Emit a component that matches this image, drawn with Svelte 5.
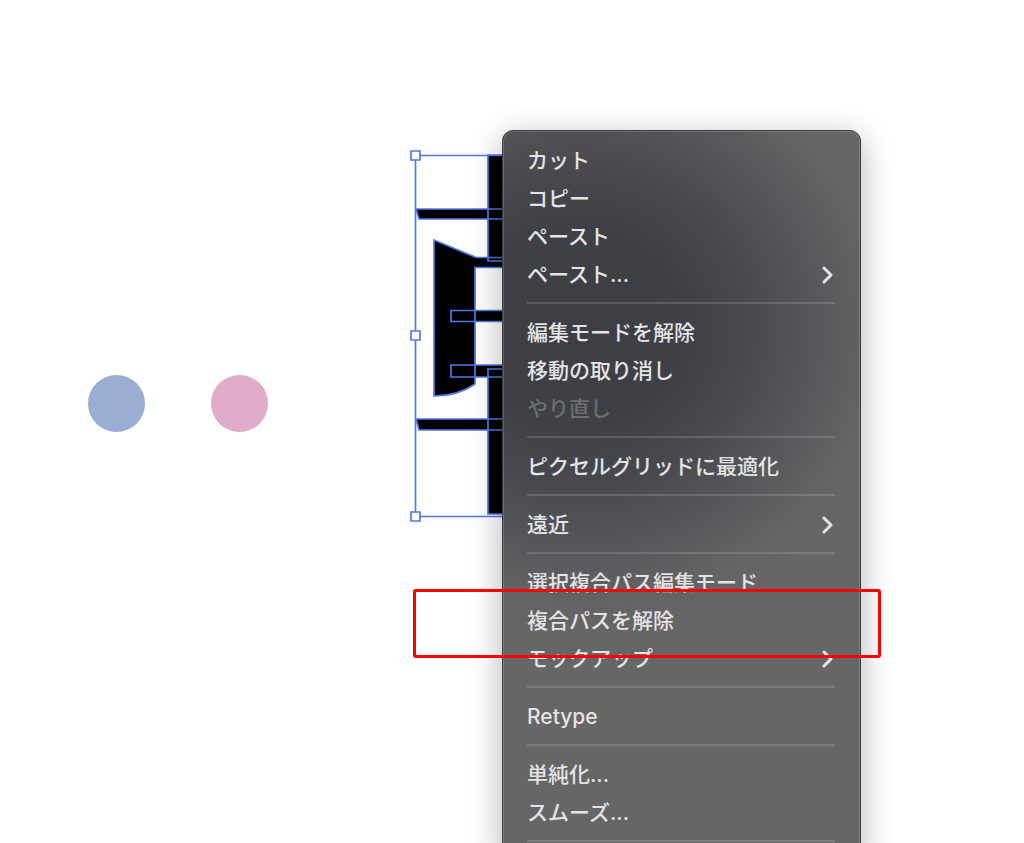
<script lang="ts">
  type Item = { label: string; submenu?: boolean; disabled?: boolean };

  const groups: Item[][] = [
    [
      { label: 'カット' },
      { label: 'コピー' },
      { label: 'ペースト' },
      { label: 'ペースト...', submenu: true }
    ],
    [
      { label: '編集モードを解除' },
      { label: '移動の取り消し' },
      { label: 'やり直し', disabled: true }
    ],
    [{ label: 'ピクセルグリッドに最適化' }],
    [{ label: '遠近', submenu: true }],
    [
      { label: '選択複合パス編集モード' },
      { label: '複合パスを解除' },
      { label: 'モックアップ', submenu: true }
    ],
    [{ label: 'Retype' }],
    [{ label: '単純化...' }, { label: 'スムーズ...' }]
  ];
</script>

<main class="canvas">
  <span class="dot dot-blue"></span>
  <span class="dot dot-pink"></span>

  <!-- Selected compound path -->
  <svg class="artwork" width="120" height="374" viewBox="0 0 120 374" aria-hidden="true">
    <g fill="#000">
      <path d="M79 6h41v106H79z" />
      <path d="M7 60h113v10H10z" />
      <path d="M25 91l42 17h53v10H66v117q-17 12-41 12z" />
      <path d="M42 161h78v11H42z" />
      <path d="M42 216h78v12H42z" />
      <path d="M79 220h41v145H79z" />
      <path d="M7 270h113v11H10z" />
    </g>
    <g fill="none" stroke="#5079e8" stroke-width="1.7">
      <path d="M120 7l-11-1H79v106h41" />
      <path d="M120 60H7l3 10h110" />
      <path d="M120 108.500H67L25 91v156q24 0 41-12V118.500h54" />
      <path d="M120 161.500H42v11h78" />
      <path d="M120 216H42v12h78" />
      <path d="M120 220H79v145h41" />
      <path d="M120 270H7l3 11h110" />
      <path d="M120 6.500H6.500v361H120" />
    </g>
    <g fill="#fff" stroke="#5079e8" stroke-width="1.7">
      <path d="M2 2h9v9H2z" />
      <path d="M2 182h9v9H2z" />
      <path d="M2 363h9v9H2z" />
    </g>
  </svg>

  <div class="menu" role="menu">
    {#each groups as group}
      {#each group as item}
        <button class="item" role="menuitem" disabled={item.disabled}>
          <span>{item.label}</span>
          {#if item.submenu}
            <svg class="chevron" width="13" height="18" viewBox="0 0 13 18" aria-hidden="true">
              <path d="M2 2l7 7-7 7" />
            </svg>
          {/if}
        </button>
      {/each}
      <hr />
    {/each}
  </div>

  <div class="highlight"></div>
</main>

<style>
  :global(body) {
    margin: 0;
    background: #fff;
  }

  .canvas {
    position: relative;
    height: 100vh;
    overflow: hidden;
    background: #fff;
    font-family: Inter, 'Noto Sans CJK JP', sans-serif;
  }

  .dot {
    position: absolute;
    top: 375px;
    width: 57px;
    height: 57px;
    border-radius: 50%;
  }

  .dot-blue {
    left: 88px;
    background: #9aadd3;
  }

  .dot-pink {
    left: 211px;
    background: #e1abca;
  }

  .artwork {
    position: absolute;
    top: 149px;
    left: 409px;
  }

  .menu {
    position: absolute;
    top: 130px;
    left: 502px;
    box-sizing: border-box;
    width: 359px;
    padding: 11px 25px 10px 24px;
    border: 1px solid #3c3d3e;
    border-radius: 11px;
    background:
      radial-gradient(
        ellipse 330px 310px at 75px 195px,
        #3d3e44 0%,
        #3f4046 32%,
        rgba(70, 71, 76, 0.92) 52%,
        rgba(80, 81, 86, 0.7) 72%,
        rgba(92, 92, 95, 0.35) 88%,
        rgba(102, 102, 102, 0) 100%
      ),
      #666;
    box-shadow:
      inset 0 0 0 1px rgba(255, 255, 255, 0.16),
      0 8px 32px rgba(0, 0, 0, 0.3);
  }

  .item {
    display: flex;
    align-items: center;
    justify-content: space-between;
    width: 100%;
    height: 38px;
    padding: 0;
    border: 0;
    background: none;
    color: #e4e4e5;
    font: inherit;
    font-size: 21px;
    font-weight: 500;
    line-height: 38px;
    text-align: left;
    white-space: nowrap;
  }

  .item:disabled {
    color: #6c6d71;
  }

  .chevron {
    fill: none;
    stroke: #e4e4e5;
    stroke-width: 3;
    stroke-linecap: round;
    stroke-linejoin: round;
  }

  hr {
    height: 2px;
    margin: 8px 0 10px;
    border: 0;
    background: rgba(255, 255, 255, 0.15);
  }

  .highlight {
    position: absolute;
    top: 589px;
    left: 413px;
    box-sizing: border-box;
    width: 468px;
    height: 69px;
    border: 3px solid #fe0000;
    border-radius: 3px;
    pointer-events: none;
  }
</style>
